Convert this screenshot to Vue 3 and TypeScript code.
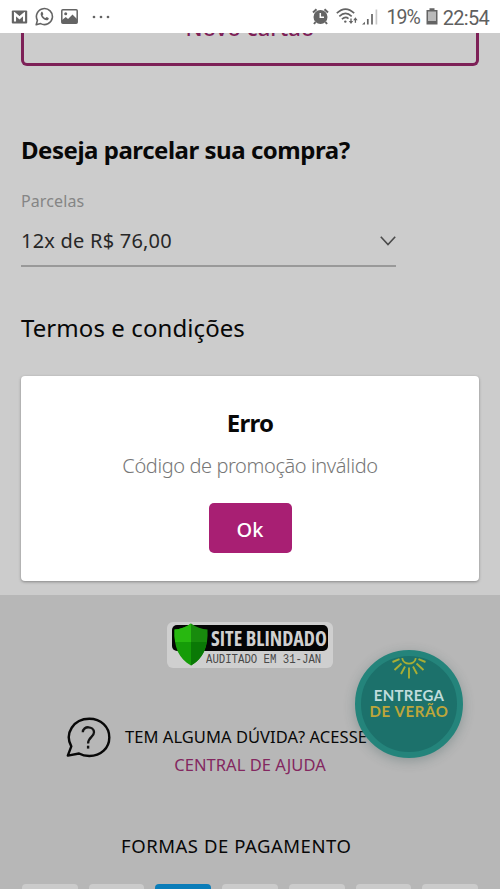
<script setup lang="ts">
interface PaymentCard {
  id: number
  highlighted: boolean
}

const cards: PaymentCard[] = Array.from({ length: 7 }, (_, i) => ({
  id: i,
  highlighted: i === 2,
}))
</script>

<template>
  <div class="screen">
    <header class="status">
      <div class="status-left">
        <svg class="mail" width="17" height="14" viewBox="0 0 17 14">
          <rect x="0.8" y="0.5" width="15.4" height="13" rx="1" fill="#646464" />
          <path d="M4 11.6V4L8.5 8L13 4V11.6" fill="none" stroke="#fff" stroke-width="2.1" />
          <path d="M3.2 2.4L8.5 7L13.8 2.4" fill="none" stroke="#fff" stroke-width="1.3" />
        </svg>
        <svg class="whats" width="19" height="19" viewBox="0 0 19 19">
          <path d="M1.2 17.8L2.4 13.4A8 8 0 1 1 5.6 16.6Z" fill="none" stroke="#646464" stroke-width="1.6" stroke-linejoin="round" />
          <path d="M6.2 5.2C6.6 4.7 7.4 4.8 7.6 5.3L8.3 6.9C8.4 7.4 7.5 8 7.6 8.4C8.2 9.6 9.2 10.5 10.4 11C10.9 11.1 11.3 10 11.8 10.1L13.5 11C14.1 11.3 13.6 12.6 12.9 13C9.7 14.6 3.8 8.5 6.2 5.2Z" fill="#646464" />
        </svg>
        <svg class="picture" width="17" height="15" viewBox="0 0 17 15">
          <rect x="0.8" y="0.8" width="15.4" height="13.4" rx="1" fill="#fff" stroke="#646464" stroke-width="1.5" />
          <circle cx="4.7" cy="4.8" r="1.5" fill="#646464" />
          <path d="M1 14V11L4.8 8L7 10L11.5 5.5L16 10V14Z" fill="#646464" />
        </svg>
        <svg class="dots" width="18" height="4" viewBox="0 0 18 4">
          <circle cx="2" cy="2" r="1.35" fill="#646464" />
          <circle cx="9" cy="2" r="1.35" fill="#646464" />
          <circle cx="16" cy="2" r="1.35" fill="#646464" />
        </svg>
      </div>
      <div class="status-right">
        <svg class="alarm" width="17" height="17" viewBox="0 0 17 17">
          <circle cx="8.5" cy="9" r="7" fill="#646464" />
          <path d="M1 4.5L4.5 1.3M12.5 1.3L16 4.5M3.5 14L2 16M13.5 14L15 16" stroke="#646464" stroke-width="2" />
          <path d="M8.3 5V9.2H12" fill="none" stroke="#fff" stroke-width="1.5" />
        </svg>
        <svg class="wifi" width="22" height="17" viewBox="0 0 22 17">
          <g fill="none" stroke="#646464" stroke-width="1.6">
            <path d="M0.8 5.2Q9.5 -3 18.2 5.2" />
            <path d="M3.3 8.3Q9.5 2.6 15.7 8.3" />
            <path d="M5.9 11.2Q9.5 8 12.5 10.6" />
          </g>
          <circle cx="9.3" cy="13.6" r="1.2" fill="#646464" />
          <path d="M15 10.5V14" stroke="#646464" stroke-width="1.3" />
          <path d="M12.8 13H17.2L15 16ZM17.2 12.2H21.6L19.4 9.2Z" fill="#646464" />
          <path d="M19.4 11V14.8" stroke="#646464" stroke-width="1.3" />
        </svg>
        <svg class="signal" width="16" height="16" viewBox="0 0 16 16">
          <path d="M0 15.5H3V12.8Z" fill="#646464" />
          <path d="M5.8 15.5V10M10 15.5V5" stroke="#646464" stroke-width="1.7" />
          <path d="M14.4 15.5V0.5" stroke="#c8c8c8" stroke-width="1.7" />
        </svg>
        <span class="percent">19%</span>
        <svg class="battery" width="12" height="17" viewBox="0 0 12 17">
          <path d="M3.5 0.3H8.5V2H11.5V16.5H0.5V2H3.5Z" fill="#646464" />
          <rect x="2" y="3.5" width="8" height="9.5" fill="#bababa" />
        </svg>
        <span class="clock">22:54</span>
      </div>
    </header>

    <main class="content">
      <div class="new-card"><span>Novo cartão</span></div>
      <h2 class="installments-title"><span>Deseja parcelar sua compra?</span></h2>
      <label class="field-label"><span>Parcelas</span></label>
      <div class="select">
        <span>12x de R$ 76,00</span>
        <svg width="16" height="10" viewBox="0 0 16 10">
          <path d="M0.8 0.8L8 8.6L15.2 0.8" fill="none" stroke="#4b4b4b" stroke-width="1.6" />
        </svg>
      </div>
      <h3 class="terms"><span>Termos e condições</span></h3>
      <section class="dialog" role="alertdialog">
        <h2 class="dialog-title"><span>Erro</span></h2>
        <p class="dialog-text"><span>Código de promoção inválido</span></p>
        <button class="ok"><span>Ok</span></button>
      </section>
    </main>

    <footer class="footer">
      <div class="seal">
        <svg class="shield" width="36" height="43" viewBox="0 0 36 43">
          <path d="M18 0.5C13 4.5 7 6 1.5 6.5C0.5 24 6 36 18 42.5Z" fill="#159c08" />
          <path d="M18 0.5C23 4.5 29 6 34.5 6.5C35.5 24 30 36 18 42.5Z" fill="#188b0d" />
          <path d="M18 0.5C13 4.5 7 6 1.5 6.5Q1.2 13 2.2 19H18Z" fill="#28b810" />
          <path d="M18 19H33.8C31.6 30.5 26.5 37.8 18 42.5Z" fill="#0a7906" />
        </svg>
        <div class="seal-name"><span>SITE BLINDADO</span></div>
        <div class="seal-date"><span>AUDITADO EM 31-JAN</span></div>
      </div>

      <div class="help">
        <svg class="bubble" width="46" height="42" viewBox="0 0 46 42">
          <path d="M5.3 29.3C-1.8 16.5 7.5 1.8 23.3 1.8C35 1.8 43.3 10 43.3 20.4C43.3 31 35 39 23.3 39C19.5 39 16 38.2 13 36.5L1.8 38.6Z" fill="none" stroke="#080808" stroke-width="2.4" stroke-linejoin="round" />
          <path d="M16.8 15.3C16.8 8.4 28 8.8 28 15.3C28 20 22.1 19.8 22.1 26.6" fill="none" stroke="#151515" stroke-width="2.3" />
          <path d="M22.1 28.7V31.6" stroke="#151515" stroke-width="2.4" />
        </svg>
        <div class="help-text">
          <span class="question">TEM ALGUMA DÚVIDA? ACESSE</span>
          <a class="help-link">CENTRAL DE AJUDA</a>
        </div>
      </div>

      <h4 class="payments-title"><span>FORMAS DE PAGAMENTO</span></h4>
      <div class="cards">
        <i v-for="card in cards" :key="card.id" :class="{ highlighted: card.highlighted }"></i>
      </div>
    </footer>

    <div class="badge">
      <svg width="36" height="24" viewBox="0 0 36 24">
        <path d="M11.2 2.2C12.2 9.4 23.8 9.4 24.8 2.2" fill="none" stroke="#a9ae35" stroke-width="1.8" />
        <path d="M8.5 3.2L1.5 6M10.5 7.5L3.5 14M14 10.5L10 18M18 11.5V22.5M22 10.5L26 18M25.5 7.5L32.5 14M27.5 3.2L34.5 6" stroke="#a9ae35" stroke-width="1.9" />
      </svg>
      <span class="badge-top">ENTREGA</span>
      <span class="badge-bottom">DE VERÃO</span>
    </div>
  </div>
</template>

<style>
body {
  margin: 0;
  background: #ccc;
}
</style>

<style scoped>
* {
  box-sizing: border-box;
}
.screen {
  position: relative;
  width: 500px;
  height: 889px;
  overflow: hidden;
  display: flex;
  flex-direction: column;
  background: #ccc;
  color: #080808;
  font-family: "Noto Sans", "Open Sans", sans-serif;
  white-space: nowrap;
}
h2, h3, h4, p {
  margin: 0;
}
.status {
  height: 33px;
  flex: none;
  background: #fff;
  display: flex;
  justify-content: space-between;
  padding: 0 11px 0 11px;
  color: #5f5f5f;
  font-family: Roboto, sans-serif;
}
.status-left,
.status-right {
  display: flex;
  align-items: center;
}
.whats { margin-left: 7px; }
.picture { margin-left: 7px; }
.dots { margin-left: 14px; }
.wifi { margin-left: 7px; }
.signal { margin-left: 4px; }
.percent { margin-left: 8px; padding-top: 2px; font-size: 19.5px; letter-spacing: -1px; }
.battery { margin-left: 6px; }
.clock { margin-left: 5px; padding-top: 2px; font-size: 20px; letter-spacing: -0.7px; }
.content {
  height: 562px;
  flex: none;
  padding: 0 21px;
  overflow: hidden;
}
.new-card {
  height: 33px;
  border: 3px solid #7d2057;
  border-top: 0;
  border-radius: 0 0 6px 6px;
  display: flex;
  justify-content: center;
  align-items: flex-start;
  color: #7d2057;
  font-size: 22px;
  line-height: 30px;
  font-weight: 500;
}
.new-card span { margin-top: -21px; letter-spacing: 0.1px; }
.installments-title {
  margin-top: 66px;
  line-height: 36px;
  font-size: 24px;
  font-weight: 700;
  letter-spacing: -0.47px;
}
.field-label {
  display: block;
  margin-top: 23px;
  line-height: 20px;
  font-size: 16px;
  letter-spacing: 0.1px;
  color: #858585;
}
.select {
  width: 375px;
  height: 56px;
  padding-top: 5px;
  border-bottom: 2px solid #999;
  display: flex;
  align-items: center;
  justify-content: space-between;
  font-size: 20px;
  letter-spacing: 0.22px;
  color: #272727;
}
.terms {
  margin-top: 43px;
  line-height: 36px;
  font-size: 24px;
  font-weight: 400;
  letter-spacing: 0.08px;
}
.dialog {
  margin-top: 30px;
  height: 205px;
  border-radius: 4px;
  background: #fff;
  box-shadow: 0 1px 3px rgba(0, 0, 0, 0.35);
  display: flex;
  flex-direction: column;
  align-items: center;
}
.dialog-title {
  margin-top: 29px;
  line-height: 36px;
  font-size: 24px;
  font-weight: 700;
  letter-spacing: -0.7px;
}
.dialog-text {
  margin-top: 10px;
  line-height: 30px;
  font-size: 20px;
  font-weight: 300;
  letter-spacing: -0.4px;
  color: #777;
}
.ok {
  margin-top: 22px;
  width: 83px;
  height: 50px;
  padding: 2px 0 0;
  border: 0;
  border-radius: 5px;
  background: #a81f73;
  color: #fff;
  font: 500 20px "Noto Sans", sans-serif;
}
.footer {
  flex: 1;
  background: #b7b7b7;
  display: flex;
  flex-direction: column;
  align-items: center;
}
.seal {
  flex: none;
  margin-top: 27px;
  width: 166px;
  height: 46px;
  border-radius: 6px;
  background: #cfcfcf;
  display: grid;
  grid-template-columns: 39px minmax(0, 1fr);
  grid-template-rows: 29px 17px;
}
.shield {
  grid-row: 1 / 3;
  grid-column: 1;
  margin: 1px 0 0 6px;
  z-index: 1;
}
.seal-name {
  grid-column: 2;
  grid-row: 1;
  margin: 3px 5px 0 -34px;
  padding-left: 39px;
  height: 26px;
  border-radius: 5px;
  background: #050505;
  color: #d0d0d0;
  font: 700 21.5px/25px "Open Sans", sans-serif;
  font-stretch: 75%;
}
.seal-name span,
.seal-date span {
  display: inline-block;
  transform-origin: left center;
}
.seal-name span { transform: scaleX(0.93); }
.seal-date {
  grid-column: 2;
  grid-row: 2;
  font: 13.5px/17px "Liberation Mono", monospace;
  color: #484848;
}
.seal-date span { transform: scaleX(0.79); }
.help {
  margin-top: 47px;
  width: 500px;
  padding-left: 66px;
  height: 64px;
  flex: none;
  display: flex;
}
.bubble { margin-top: 2px; }
.help-text {
  margin-left: 13px;
  display: flex;
  flex-direction: column;
  width: 250px;
  font-size: 16.5px;
  line-height: 28px;
  letter-spacing: 0.05px;
  margin-top: 8px;
}
.help-link {
  align-self: center;
  color: #832760;
}
.payments-title {
  margin-top: 53px;
  width: 500px;
  padding-left: 121px;
  line-height: 28px;
  font-size: 18.5px;
  font-weight: 400;
  letter-spacing: 0.54px;
}
.cards {
  margin-top: 24px;
  display: flex;
  gap: 11px;
}
.cards i {
  width: 55.7px;
  height: 36px;
  border-radius: 4px;
  background: #cbcbcb;
}
.cards .highlighted { background: #0b7db9; }
.badge {
  position: absolute;
  left: 355px;
  top: 650px;
  width: 108px;
  height: 108px;
  border: 6px solid #24847b;
  border-radius: 50%;
  background: #1c716b;
  box-shadow: 0 3px 12px rgba(40, 75, 75, 0.3);
  display: flex;
  flex-direction: column;
  align-items: center;
  font: 700 15px/16px Lato, sans-serif;
}
.badge-top { margin-top: 7px; color: #bfdcdc; letter-spacing: 0.3px; }
.badge-bottom { color: #bda63a; letter-spacing: 0.6px; }
</style>
